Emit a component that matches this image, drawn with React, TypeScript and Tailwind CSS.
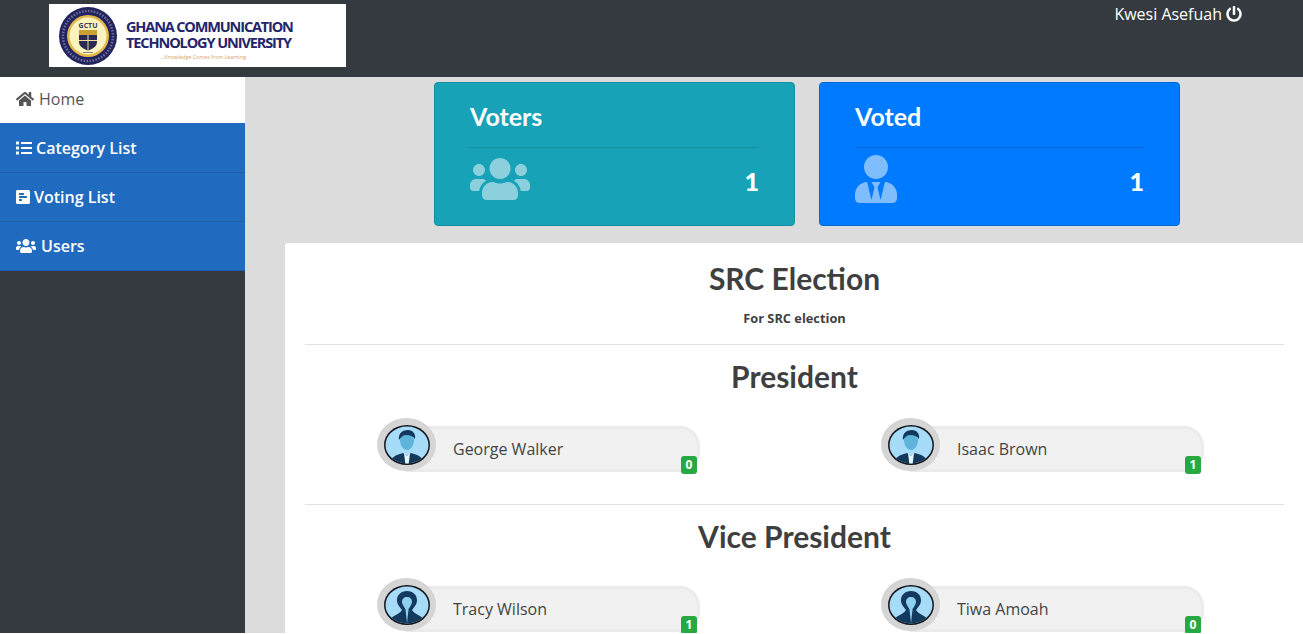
import React from "react";
import { FaHome, FaList, FaPollH, FaUsers, FaPowerOff, FaUserTie } from "react-icons/fa";

const navItems = [
  { label: "Category List", icon: FaList, iconSize: "h-[16px] w-[16px]", gap: "gap-[4px]" },
  { label: "Voting List", icon: FaPollH, iconSize: "h-[16px] w-[14px]", gap: "gap-[4px]" },
  { label: "Users", icon: FaUsers, iconSize: "h-[16px] w-[20px]", gap: "gap-[5px]" },
];

const Seal = () => (
  <svg width="58" height="58" viewBox="0 0 58 58" className="shrink-0">
    <circle cx="29" cy="29" r="29" fill="#23235f" />
    <circle cx="29" cy="29" r="25" fill="none" stroke="#8f8fb5" strokeWidth="2.5" strokeDasharray="1.5 1.5" opacity="0.7" />
    <circle cx="29" cy="29" r="21" fill="#e2b84f" />
    <circle cx="29" cy="29" r="18.5" fill="#fdf3bf" />
    <text x="29" y="21" textAnchor="middle" fontSize="7" fontWeight="700" fill="#3a3a55" fontFamily="'Open Sans', sans-serif">
      GCTU
    </text>
    <rect x="20" y="23" width="18" height="5" fill="#c9a133" />
    <path d="M20 28h18v7c0 5-5 7-9 8.500-4-1.500-9-3.500-9-8.500z" fill="#2a2a52" />
    <path d="M28.500 28h1v15h-1zM20 33h18v1H20z" fill="#f0dfa0" />
    <rect x="24" y="45" width="10" height="1" fill="#8a8a70" />
  </svg>
);

const Logo = () => (
  <div className="flex h-[63px] w-[297px] items-center bg-white pl-[10px]">
    <Seal />
    <div className="ml-[9px] flex flex-col font-['Open_Sans',sans-serif] text-[#25256a]">
      <div className="mt-[8px] text-[14.5px] leading-[16px] font-bold tracking-[-1.15px] whitespace-nowrap">
        GHANA COMMUNICATION
      </div>
      <div className="text-[14.5px] leading-[16px] font-bold tracking-[-1.1px] whitespace-nowrap">
        TECHNOLOGY UNIVERSITY
      </div>
      <div className="mt-[2px] pl-[34px] text-[5.300px] leading-[8px] text-[#d9a35a] whitespace-nowrap">
        ...Knowledge Comes from Learning
      </div>
    </div>
  </div>
);

const Avatar = ({ female }: { female?: boolean }) => (
  <div className="z-10 flex h-[53px] w-[59px] shrink-0 items-center justify-center rounded-[50%] bg-[#d5d5d5]">
    <svg width="48" height="42" viewBox="0 0 48 42">
      <defs>
        <clipPath id={female ? "clipF" : "clipM"}>
          <ellipse cx="24" cy="21" rx="21.500" ry="18.500" />
        </clipPath>
      </defs>
      <ellipse cx="24" cy="21" rx="23" ry="20" fill="#14171d" />
      <ellipse cx="24" cy="21" rx="21.500" ry="18.500" fill="#a6dcf7" />
      <g clipPath={female ? "url(#clipF)" : "url(#clipM)"}>
        {female ? (
          <>
            <path d="M24 7c-6 0-10 4-10 9 0 5 3 7 5 10-2 4-8 5-12 9v7h34v-7c-4-4-10-5-12-9 2-3 5-5 5-10 0-5-4-9-10-9z" fill="#123a5e" />
            <path d="M24 13c-3 0-5 2-5 5 0 3 3 5 4 9h2c1-4 4-6 4-9 0-3-2-5-5-5z" fill="#8fd0ef" />
            <path d="M22.500 26h3l-1.500 13z" fill="#8fd0ef" />
          </>
        ) : (
          <>
            <path d="M24 9c-5 0-7 3-7 7 0 5 3 10 7 10s7-5 7-10c0-4-2-7-7-7z" fill="#5fb4dc" />
            <path d="M16 16c-1-6 3-10 9-10 5 0 8 4 7 9-2-3-5-4-9-4-3 0-5 2-7 5z" fill="#12385c" />
            <path d="M6 42c1-9 7-11 14-13l4 3 4-3c7 2 13 4 14 13z" fill="#12385c" />
            <path d="M21 29l3 3 3-3-1.500 12h-3z" fill="#e6f7ff" />
          </>
        )}
      </g>
    </svg>
  </div>
);

const Candidate = ({ name, votes, female }: { name: string; votes: number; female?: boolean }) => (
  <div className="flex w-[323px] items-start">
    <Avatar female={female} />
    <div className="relative mt-[8px] -ml-[32px] h-[46px] w-[296px] rounded-r-[20px] rounded-l-[4px] border-[3px] border-[#ebebeb] bg-[#f1f1f1] pl-[46px] font-['Open_Sans',sans-serif] text-[16px] leading-[40px] text-[#444444]">
      {name}
      <span className="absolute right-[0px] bottom-[-5px] flex h-[18px] w-[16px] items-center justify-center rounded-[3px] bg-[#28a745] text-[12px] font-bold text-white">
        {votes}
      </span>
    </div>
  </div>
);

const StatCard = ({
  title,
  bg,
  line,
  icon,
}: {
  title: string;
  bg: string;
  line: string;
  icon: React.ReactNode;
}) => (
  <div className={`h-[144px] w-[361px] rounded-[4px] border px-[35px] ${bg}`}>
    <div className={`h-[65px] border-b pt-[15px] font-['Lato',sans-serif] text-[25px] leading-[36px] font-bold text-white ${line}`}>
      {title}
    </div>
    <div className="flex h-[70px] items-center justify-between">
      {icon}
      <span className="mb-[2px] font-['Lato',sans-serif] text-[25px] font-black text-white">1</span>
    </div>
  </div>
);

const App = () => {
  return (
    <div className="flex h-[633px] w-full flex-col overflow-hidden bg-[#dcdcdc] font-['Open_Sans',sans-serif]">
      <header className="flex h-[77px] shrink-0 justify-between bg-[#343a40] pt-[4px] pr-[61px] pl-[49px]">
        <Logo />
        <div className="flex h-[20px] items-center gap-[4px] text-[16px] leading-[20px] text-white">
          Kwesi Asefuah
          <FaPowerOff className="h-[16px] w-[16px]" />
        </div>
      </header>

      <div className="flex min-h-0 flex-1">
        <aside className="w-[245px] shrink-0 bg-[#343a40]">
          <div className="flex h-[46px] items-center gap-[5px] bg-white pb-[2px] pl-[16px] text-[16px] font-medium text-[#555555]">
            <FaHome className="h-[16px] w-[18px]" />
            Home
          </div>
          <div className="bg-[#206bbf] pt-px">
            {navItems.map((item) => (
              <div
                key={item.label}
                className={`flex h-[49px] items-center border-b border-[#1f5fa8] pl-[16px] text-[16px] font-semibold text-white ${item.gap}`}
              >
                <item.icon className={item.iconSize} />
                {item.label}
              </div>
            ))}
          </div>
        </aside>

        <main className="min-w-0 flex-1 pt-[5px] pl-[40px]">
          <div className="flex justify-center gap-[24px] pl-[26px]">
            <StatCard
              title="Voters"
              bg="border-[#148ea1] bg-[#17a2b8]"
              line="border-[#148ea1]"
              icon={<FaUsers className="mb-[8px] h-[48px] w-[60px] text-[#8bd0dc]" />}
            />
            <StatCard
              title="Voted"
              bg="border-[#0069d9] bg-[#007bff]"
              line="border-[#0069d9]"
              icon={<FaUserTie className="mb-[8px] h-[48px] w-[42px] text-[#80bdff]" />}
            />
          </div>

          <section className="mt-[17px] h-[420px] rounded-tl-[3px] bg-white pt-[14px] pr-[19px] pl-[20px] text-[#3f3f3f]">
            <h1 className="text-center font-['Lato',sans-serif] text-[30px] leading-[42px] font-bold">SRC Election</h1>
            <p className="mt-[10px] text-center text-[12.8px] leading-[18px] font-bold">For SRC election</p>
            <hr className="mt-[17px] border-[#e3e3e3]" />
            <h2 className="mt-[10px] text-center font-['Lato',sans-serif] text-[30px] leading-[42px] font-bold">President</h2>
            <div className="mt-[21px] flex justify-between pr-[80px] pl-[72px]">
              <Candidate name="George Walker" votes={0} />
              <Candidate name="Isaac Brown" votes={1} />
            </div>
            <hr className="mt-[32px] border-[#e3e3e3]" />
            <h2 className="mt-[10px] text-center font-['Lato',sans-serif] text-[30px] leading-[42px] font-bold">Vice President</h2>
            <div className="mt-[21px] flex justify-between pr-[80px] pl-[72px]">
              <Candidate name="Tracy Wilson" votes={1} female />
              <Candidate name="Tiwa Amoah" votes={0} female />
            </div>
          </section>
        </main>
      </div>
    </div>
  );
};

export default App;
